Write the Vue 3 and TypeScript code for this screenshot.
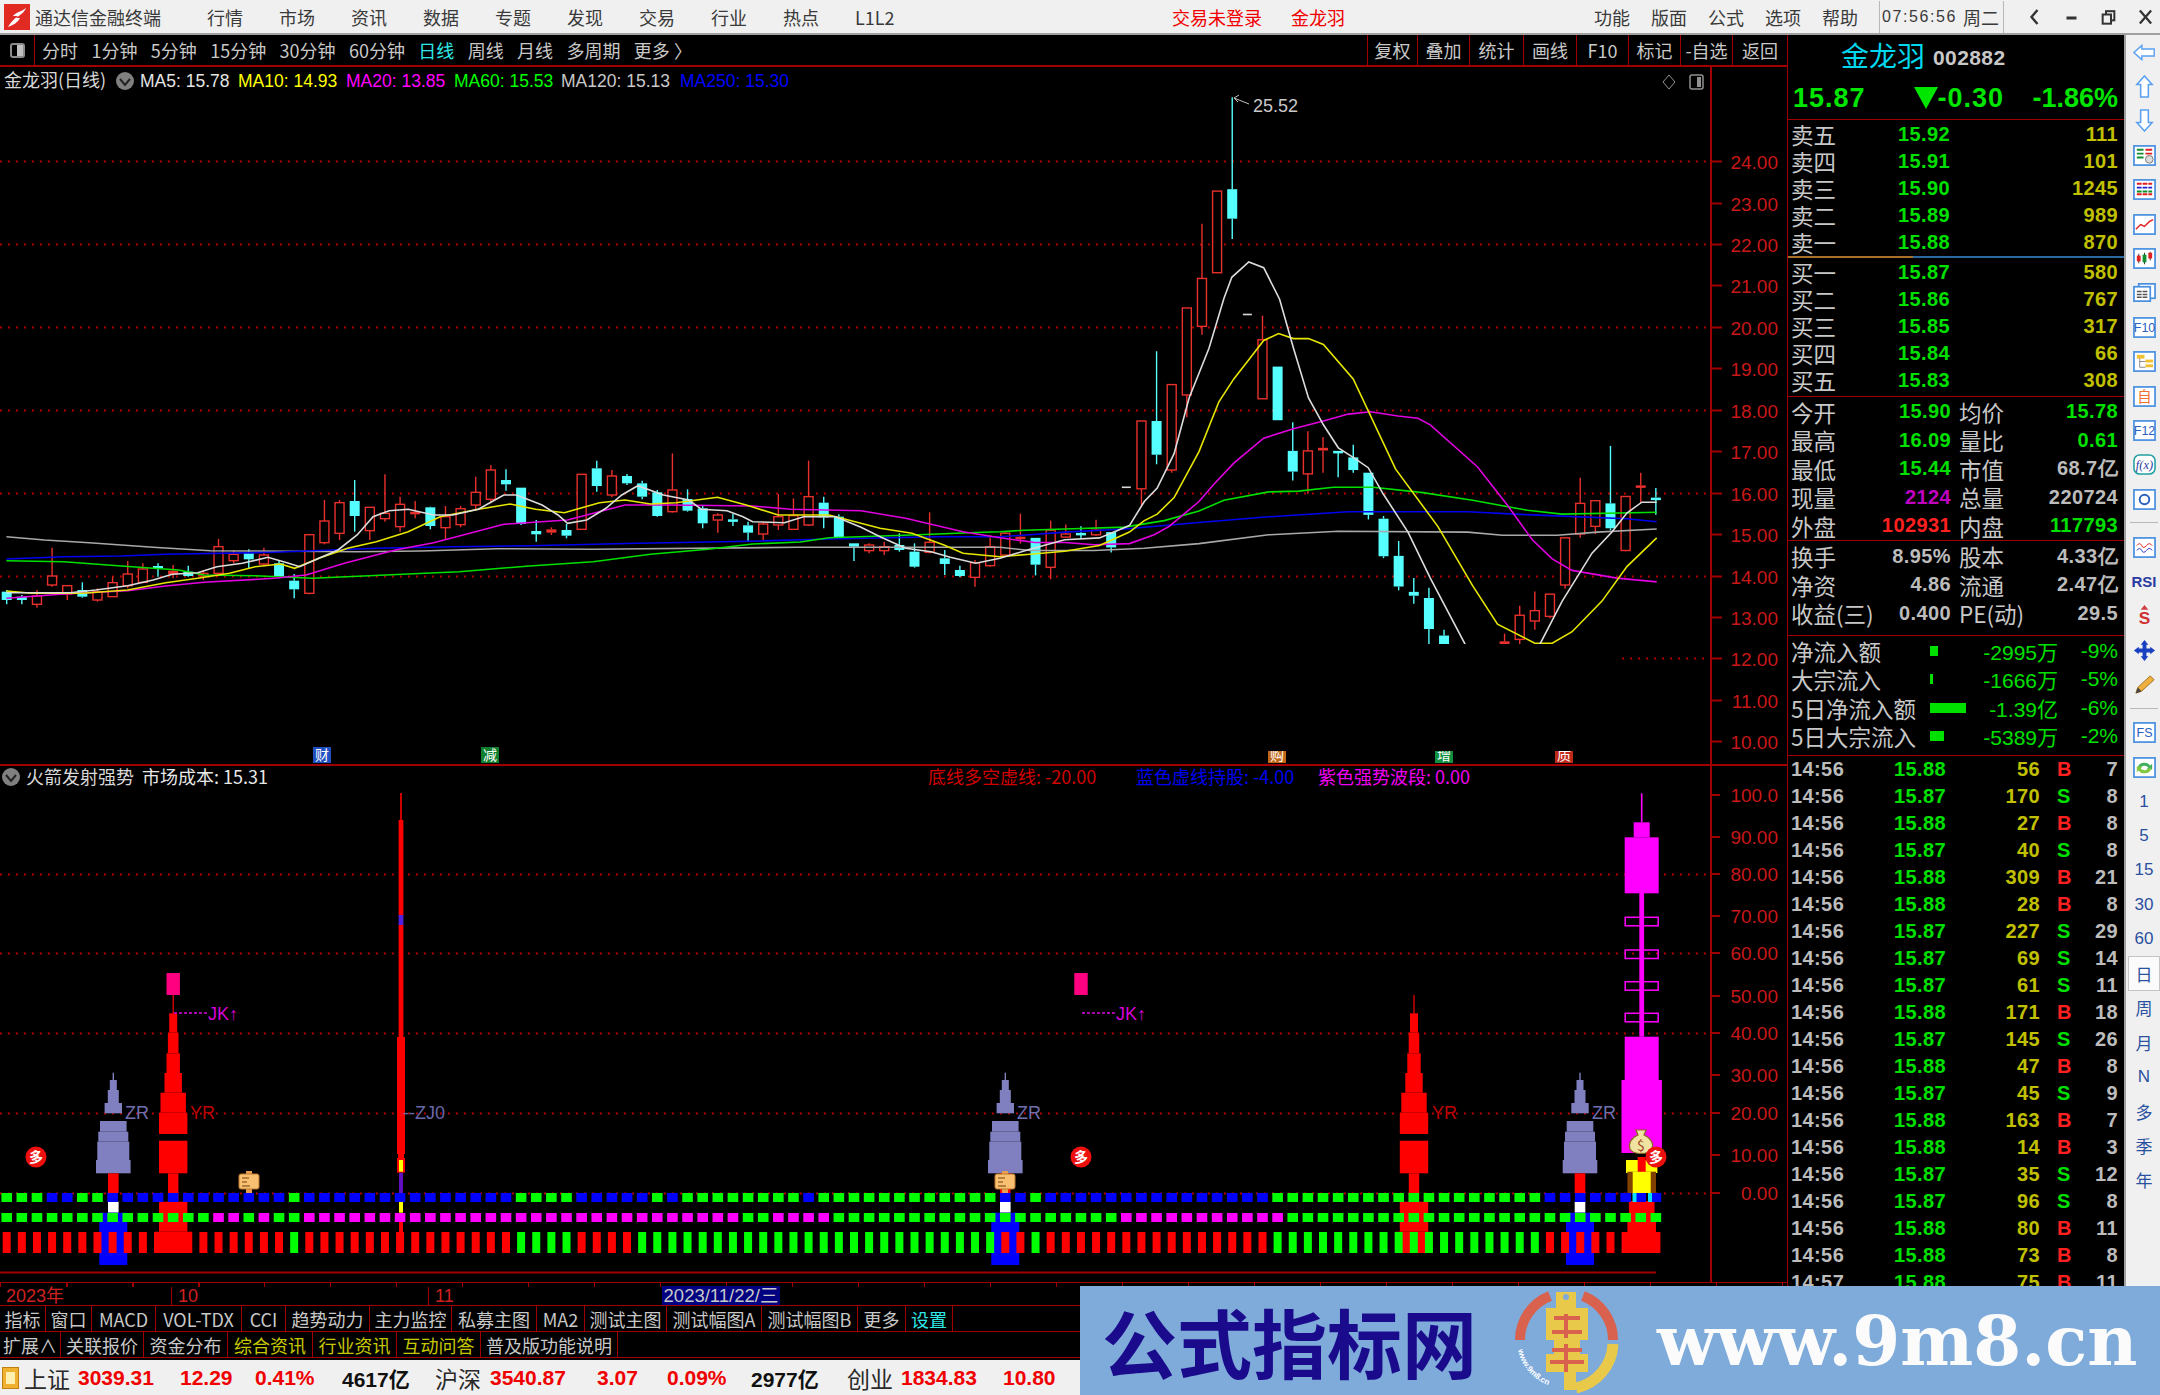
<script setup lang="ts">
type Kind = 'u' | 'd' | 'f' | 'w'
type Reading = [Kind, number, number, number, number]
type Block = [number, number, number, string]

const RED = '#ff0000'
const GRAY = '#8080c0'
const PINK = '#ff00ff'
const YEL = '#ffff00'

const barX = (i: number) => 6.7 + 15.13 * i

// readings off the chart: [kind, high, body top, body bottom, low]
const leftBars: Reading[] = [
  ['d',510,515,540,553],['d',525,530,540,553],['u',510,528,553,563],['u',383,468,495,500],['u',495,497,522,540],
  ['d',487,510,530,533],['u',505,515,540,545],['u',470,488,530,530],['u',423,462,497,505],['u',430,447,487,490],
  ['d',430,438,443,470],['f',435,452,463,475],['d',437,455,468,470],['u',450,460,468,480],['u',357,380,460,462],
  ['u',390,403,422,430],['d',388,400,418,445],['u',383,405,432,435],['d',420,430,470,475],['d',462,482,508,535],
  ['u',343,344,520,523],['u',240,303,368,373],['u',240,248,340,360],['d',180,243,288,335],['u',262,262,332,360],
  ['u',163,280,296,305],['u',230,253,320,335],['f',243,275,283,295],['d',260,262,318,328],['u',258,290,323,360],
  ['u',258,266,314,322],['u',170,217,255,270],['u',135,150,238,250],['d',148,180,193,212],['d',203,203,312,315],
  ['d',300,333,343,365],['f',322,328,338,345],['d',312,330,347,355],['u',163,163,328,330],['d',122,145,198,215],
  ['u',150,168,225,232],['d',162,168,190,195],['d',182,190,230,238],['d',210,217,288,290],['u',100,210,275,278],
  ['d',208,237,272,275],['d',258,265,310,325],['u',280,285,300,338],['d',282,298,300,318],['d',305,316,338,365],
  ['u',305,312,342,362],['u',222,290,315,330],['u',235,287,328,330],['u',122,230,315,318],['d',230,248,292,325],
  ['d',283,290,352,355],['d',370,370,380,423],['u',370,375,392,400],['u',365,380,392,405],['d',340,375,390,395],
  ['d',370,395,440,443],['u',277,367,397,400],['d',390,415,432,465],['d',437,450,468,472],['u',420,428,472,500],
  ['u',345,380,437,440]
]
const rightBars: Reading[] = [
  ['u',1180,1183,1240,1240],['f',1132,1192,1196,1210],['d',1195,1195,1265,1293],['u',1150,1175,1272,1303],
  ['u',1160,1185,1193,1195],['d',1165,1182,1185,1198],['u',1148,1175,1187,1190],['d',1180,1180,1220,1233],
  ['w',1063,1063,1063,1063],['u',890,890,1067,1110],['d',708,890,978,1003],['u',795,795,1018,1025],
  ['u',595,595,822,880],['u',375,518,643,665],['u',290,290,503,503],['d',45,285,362,415],
  ['w',612,612,612,612],['u',615,678,832,832],['d',748,748,888,888],['d',893,968,1022,1045],
  ['u',917,968,1028,1080],['f',932,960,967,1025],['d',968,968,973,1037],['d',952,985,1018,1025],
  ['d',1025,1025,1135,1147],['d',1138,1145,1243,1248],['d',1203,1242,1322,1332],['d',1300,1336,1346,1367],
  ['d',1325,1352,1433,1473],['d',1435,1450,1500,1500],['u',1480,1500,1600,1620],['u',1520,1560,1640,1660],
  ['u',1500,1540,1600,1620],['f',1445,1465,1473,1500],['u',1372,1397,1460,1473],['u',1335,1385,1412,1435],
  ['u',1342,1342,1400,1405],['u',1195,1195,1318,1328],['u',1038,1105,1185,1195],['u',1098,1098,1165,1185],
  ['d',955,1105,1170,1175],['u',1087,1087,1228,1230],['f',1025,1058,1063,1103],['d',1065,1090,1092,1135]
]

const leftY = (v: number) => 420 + v / 3
const rightY = (v: number) => 80 + v / 2.61

const candleColor = (k: Kind) => (k === 'd' ? '#55ffff' : k === 'w' ? '#d8d8d8' : '#e8302c')
const candles = [
  ...leftBars.map((r, i) => ({ r, x: barX(i), y: leftY })),
  ...rightBars.map((r, i) => ({ r, x: barX(i + 66), y: rightY }))
].map(({ r, x, y }) => ({
  x,
  kind: r[0],
  color: candleColor(r[0]),
  hi: y(r[1]),
  top: y(r[2]),
  bot: y(r[3]),
  lo: y(r[4])
}))

const toPoints = (left: number[][], right: number[][]) =>
  [
    ...left.map(([x, y]) => `${(x / 1.568).toFixed(1)},${leftY(y).toFixed(1)}`),
    ...right.map(([x, y]) => `${(1000 + x / 2.01).toFixed(1)},${rightY(y).toFixed(1)}`)
  ].join(' ')

const maLines = [
  { color: '#a8a8a8', points: toPoints(
    [[10,350],[70,360],[140,368],[240,382],[330,392],[560,395],[660,393],[780,386],[930,388],[1250,382],[1568,382]],
    [[60,1228],[190,1228],[290,1222],[400,1210],[540,1187],[680,1178],[940,1180],[1010,1188],[1120,1188],[1200,1180],[1320,1172]]) },
  { color: '#0000f0', points: toPoints(
    [[10,417],[100,410],[190,408],[260,403],[430,397],[590,385],[710,380],[830,377],[1000,370],[1090,367],[1190,363],[1300,357],[1470,350],[1568,350]],
    [[60,1187],[130,1180],[250,1172],[400,1155],[540,1140],[700,1127],[940,1127],[1070,1135],[1260,1145],[1320,1153]]) },
  { color: '#00e000', points: toPoints(
    [[10,422],[100,425],[190,438],[280,450],[320,465],[400,467],[490,475],[640,462],[720,455],[830,438],[930,425],[1020,403],[1110,388],[1180,372],[1255,366],[1300,353],[1430,345],[1540,337],[1568,335]],
    [[50,1175],[130,1172],[250,1167],[330,1150],[400,1125],[450,1097],[540,1075],[600,1073],[670,1063],[750,1063],[850,1077],[950,1097],[1060,1123],[1130,1133],[1320,1128]]) },
  { color: '#e000e0', points: toPoints(
    [[10,535],[100,522],[200,512],[260,498],[320,487],[430,475],[480,465],[540,430],[620,390],[680,368],[790,313],[890,300],[980,255],[1050,255],[1180,258],[1240,268],[1350,272],[1420,295],[1510,335],[1568,353]],
    [[70,1207],[130,1207],[190,1213],[260,1210],[310,1187],[340,1165],[400,1100],[430,1055],[470,1000],[530,935],[590,910],[650,890],[700,872],[745,866],[800,877],[840,883],[865,900],[960,1010],[1020,1110],[1070,1200],[1110,1250],[1150,1280],[1240,1300],[1320,1310]]) },
  { color: '#e6e600', points: toPoints(
    [[10,513],[50,520],[130,520],[200,510],[260,488],[310,475],[360,460],[400,440],[440,432],[462,445],[500,415],[545,385],[590,365],[640,335],[690,290],[750,268],[800,252],[840,268],[885,278],[940,248],[980,240],[1020,252],[1060,248],[1125,232],[1170,255],[1220,285],[1300,285],[1380,325],[1430,340],[1480,375],[1510,400],[1568,410]],
    [[60,1238],[130,1230],[200,1215],[260,1180],[290,1150],[316,1133],[350,1090],[400,970],[440,840],[470,780],[500,730],[530,680],[560,662],[590,675],[620,675],[650,690],[710,780],[795,1015],[880,1165],[950,1320],[1000,1420],[1075,1470],[1110,1470],[1150,1440],[1210,1360],[1260,1270],[1320,1195]]) },
  { color: '#dcdcdc', points: toPoints(
    [[10,518],[60,518],[110,518],[150,510],[200,497],[240,480],[270,463],[310,458],[340,440],[380,430],[420,412],[450,428],[470,440],[500,415],[530,390],[560,345],[585,290],[610,272],[640,268],[680,285],[710,285],[750,268],[790,225],[810,225],[850,255],[875,285],[890,310],[920,300],[950,265],[975,225],[1000,197],[1040,225],[1080,240],[1100,268],[1140,272],[1165,290],[1180,305],[1230,308],[1260,290],[1310,290],[1350,322],[1380,350],[1420,385],[1460,395],[1490,412],[1530,430],[1568,415]],
    [[60,1225],[130,1200],[200,1195],[260,1163],[290,1100],[316,1065],[350,975],[380,830],[420,700],[450,570],[466,515],[500,475],[530,490],[562,572],[590,700],[620,830],[650,900],[680,960],[710,985],[740,1012],[770,1080],[820,1180],[865,1300],[935,1473],[1000,1650],[1060,1560],[1085,1473],[1130,1360],[1190,1235],[1230,1180],[1260,1130],[1290,1102],[1320,1102]]) }
]

const grid = [24, 22, 20, 18, 16, 14]
const priceY = (p: number) => Math.round(161.2 + (24 - p) * 41.43) + 0.5
const axisPrices = Array.from({ length: 15 }, (_, i) => 24 - i)

const maLegend = [
  { x: 140, color: '#e4e4e4', text: 'MA5: 15.78' },
  { x: 238, color: '#ffff00', text: 'MA10: 14.93' },
  { x: 346, color: '#ff00ff', text: 'MA20: 13.85' },
  { x: 454, color: '#00ff00', text: 'MA60: 15.53' },
  { x: 561, color: '#c8c8c8', text: 'MA120: 15.13' },
  { x: 680, color: '#0000ff', text: 'MA250: 15.30' }
]

const notices = [
  { x: 322, bg: '#2050c0', text: '财', cut: false },
  { x: 490, bg: '#108030', text: '减', cut: false },
  { x: 1277, bg: '#c06818', text: '购', cut: true },
  { x: 1444, bg: '#109040', text: '增', cut: true },
  { x: 1564, bg: '#c02818', text: '质', cut: true }
]

// lower pane
const subTicks = [
  { y: 795, label: '100.0' }, { y: 837, label: '90.00' }, { y: 874, label: '80.00' }, { y: 916, label: '70.00' },
  { y: 953, label: '60.00' }, { y: 996, label: '50.00' }, { y: 1033, label: '40.00' }, { y: 1075, label: '30.00' },
  { y: 1113, label: '20.00' }, { y: 1155, label: '10.00' }, { y: 1193, label: '0.00' }
]
const subGrid = [874.5, 953.5, 1033.5, 1113.5, 1193.5]

const expand = (runs: [string, number][]) => runs.flatMap(([c, n]) => Array<string>(n).fill(c))
const G = '#00ff00'
const B = '#0000ff'
const M = '#ff00ff'
const rowA = expand([[G,3],[B,2],[G,2],[B,12],[G,1],[B,14],[G,4],[B,5],[G,1],[B,1],[G,8],[B,1],[G,12],[B,2],[G,1],[B,15],[G,18],[B,8]])
const rowB = expand([[G,14],[M,2],[G,1],[M,1],[G,2],[M,29],[G,2],[M,4],[G,19],[M,11],[G,25]])
const rowC = expand([[RED,19],[G,1],[RED,14],[G,4],[RED,4],[G,24],[RED,2],[G,1],[RED,15],[G,18],[RED,8]])

const grayRocket = (x: number) => ({
  x,
  blocks: [
    [0.7, 1072.7, 1080, GRAY], [3.5, 1080, 1090, GRAY], [5.5, 1090, 1103, GRAY], [8.7, 1103, 1113.3, GRAY],
    [13.3, 1121, 1131.7, GRAY], [15, 1131.7, 1141.7, GRAY], [16, 1141.7, 1160, GRAY], [17.3, 1160, 1173.3, GRAY],
    [5.3, 1173.3, 1193, RED], [5.3, 1201.7, 1212.7, '#ffffff'], [14, 1212.7, 1265, B]
  ] as Block[]
})
const redRocket = (x: number) => ({
  x,
  blocks: [
    [0.6, 995, 1013.3, RED], [4, 1013.3, 1032.7, RED], [5.3, 1032.7, 1053.3, RED], [6.7, 1053.3, 1073, RED],
    [8.7, 1073, 1092.7, RED], [12.7, 1092.7, 1112.7, RED], [14.2, 1112.7, 1134, RED], [14.2, 1140.7, 1173.3, RED],
    [5.2, 1173.3, 1201.7, RED], [14.2, 1201.7, 1231.7, RED], [18.5, 1231.7, 1253, RED]
  ] as Block[]
})
const rockets = [
  grayRocket(113.3),
  redRocket(173.2),
  {
    x: 401,
    blocks: [
      [0.8, 793, 820, RED], [2.4, 820, 915, RED], [2.4, 915, 925, '#5020e0'], [2.4, 925, 1037, RED], [4, 1037, 1154, RED],
      [3, 1154, 1160, RED], [4, 1158, 1172.7, RED], [2, 1160, 1171.7, YEL], [2, 1172.7, 1193, '#6010c0'],
      [2, 1201.7, 1212.7, YEL], [2, 1221, 1232, RED]
    ] as Block[]
  },
  grayRocket(1005.3),
  redRocket(1414),
  grayRocket(1580),
  {
    x: 1641.7,
    blocks: [
      [0.8, 793.3, 822.3, PINK], [8, 822.3, 837.3, PINK], [17, 837.3, 893.3, PINK], [2.4, 893, 1036.7, PINK],
      [17, 1036.7, 1080, PINK], [20.2, 1080, 1153, PINK], [15.7, 1160, 1173, YEL], [14.3, 1171.7, 1193, '#804000'],
      [9, 1171.7, 1193, YEL], [4, 1157, 1171.7, RED], [12.8, 1201, 1213, RED], [14.3, 1213, 1232, RED], [18.7, 1232, 1253, RED]
    ] as Block[]
  }
]
const hollowBoxes = [917.3, 950, 981.7, 1013.3]

const jkMarks = [
  { sq: 173.2, from: 174, to: 207, y: 1013 },
  { sq: 1081, from: 1082, to: 1115, y: 1013 }
]
const duoMarks = [[36, 1157], [1081, 1157], [1656, 1157]]
const noteMarks = [[249, 1182], [1005, 1182]]

// right panel
const sells = [
  ['卖五', '15.92', '111'], ['卖四', '15.91', '101'], ['卖三', '15.90', '1245'], ['卖二', '15.89', '989'], ['卖一', '15.88', '870']
]
const buys = [
  ['买一', '15.87', '580'], ['买二', '15.86', '767'], ['买三', '15.85', '317'], ['买四', '15.84', '66'], ['买五', '15.83', '308']
]
const stats = [
  { a: '今开', v: '15.90', vc: 'green', b: '均价', w: '15.78', wc: 'green' },
  { a: '最高', v: '16.09', vc: 'green', b: '量比', w: '0.61', wc: 'green' },
  { a: '最低', v: '15.44', vc: 'green', b: '市值', w: '68.7亿', wc: 'gray' },
  { a: '现量', v: '2124', vc: 'purple', b: '总量', w: '220724', wc: 'gray' },
  { a: '外盘', v: '102931', vc: 'red', b: '内盘', w: '117793', wc: 'green' }
]
const finance = [
  { a: '换手', v: '8.95%', b: '股本', w: '4.33亿' },
  { a: '净资', v: '4.86', b: '流通', w: '2.47亿' },
  { a: '收益(三)', v: '0.400', b: 'PE(动)', w: '29.5' }
]
const flows = [
  { label: '净流入额', bar: 8, value: '-2995万', pct: '-9%' },
  { label: '大宗流入', bar: 3, value: '-1666万', pct: '-5%' },
  { label: '5日净流入额', bar: 36, value: '-1.39亿', pct: '-6%' },
  { label: '5日大宗流入', bar: 14, value: '-5389万', pct: '-2%' }
]
const ticks: [string, string, string, string, string][] = [
  ['14:56','15.88','56','B','7'],['14:56','15.87','170','S','8'],['14:56','15.88','27','B','8'],['14:56','15.87','40','S','8'],
  ['14:56','15.88','309','B','21'],['14:56','15.88','28','B','8'],['14:56','15.87','227','S','29'],['14:56','15.87','69','S','14'],
  ['14:56','15.87','61','S','11'],['14:56','15.88','171','B','18'],['14:56','15.87','145','S','26'],['14:56','15.88','47','B','8'],
  ['14:56','15.87','45','S','9'],['14:56','15.88','163','B','7'],['14:56','15.88','14','B','3'],['14:56','15.87','35','S','12'],
  ['14:56','15.87','96','S','8'],['14:56','15.88','80','B','11'],['14:56','15.88','73','B','8'],['14:57','15.88','75','B','11']
]

const menus = ['行情', '市场', '资讯', '数据', '专题', '发现', '交易', '行业', '热点', 'L1L2']
const sysMenus = ['功能', '版面', '公式', '选项', '帮助']
const periods = ['分时', '1分钟', '5分钟', '15分钟', '30分钟', '60分钟', '日线', '周线', '月线', '多周期', '更多 〉']
const chartBtns = ['复权', '叠加', '统计', '画线', 'F10', '标记', '-自选', '返回']
const tabs1 = ['指标', '窗口', 'MACD', 'VOL-TDX', 'CCI', '趋势动力', '主力监控', '私募主图', 'MA2', '测试主图', '测试幅图A', '测试幅图B', '更多', '设置']
const tabs2 = ['扩展∧', '关联报价', '资金分布', '综合资讯', '行业资讯', '互动问答', '普及版功能说明']
const cycles = ['1', '5', '15', '30', '60', '日', '周', '月', 'N', '多', '季', '年']
const index = [
  { t: '上证', c: 'name' }, { t: '3039.31', c: 'up' }, { t: '12.29', c: 'up' }, { t: '0.41%', c: 'up' }, { t: '4617亿', c: 'amt' },
  { t: '沪深', c: 'name' }, { t: '3540.87', c: 'up' }, { t: '3.07', c: 'up' }, { t: '0.09%', c: 'up' }, { t: '2977亿', c: 'amt' },
  { t: '创业', c: 'name' }, { t: '1834.83', c: 'up' }, { t: '10.80', c: 'up' }
]
</script>

<template>
  <div class="terminal">
    <header class="menubar">
      <svg class="app-logo" viewBox="0 0 26 26">
        <rect width="26" height="26" fill="#e02a22" />
        <path d="M22 4 C17 8 12 8 9 12 L14 12 C10 15 7 18 4 23 C11 20 14 18 16 14 L12 14 C16 11 20 9 22 4 Z" fill="#fff" />
      </svg>
      <span class="app-name">通达信金融终端</span>
      <nav class="menus"><span v-for="m in menus" :key="m">{{ m }}</span></nav>
      <span class="login">交易未登录</span>
      <span class="login">金龙羽</span>
      <nav class="sys-menus"><span v-for="m in sysMenus" :key="m">{{ m }}</span></nav>
      <div class="clock"><span class="time">07:56:56</span><span>周二</span></div>
      <div class="win-btns">
        <svg viewBox="0 0 14 20"><path d="M10 3 L4 10 L10 17" fill="none" stroke="#333" stroke-width="2.4" /></svg>
        <svg viewBox="0 0 14 20"><path d="M2 11 H12" stroke="#333" stroke-width="3" /></svg>
        <svg viewBox="0 0 18 20"><rect x="6" y="3" width="10" height="11" fill="none" stroke="#333" stroke-width="2.4" /><rect x="2" y="7" width="10" height="11" fill="#f0f0f0" stroke="#333" stroke-width="2.4" /></svg>
        <svg viewBox="0 0 16 20"><path d="M2 3 L14 17 M14 3 L2 17" stroke="#333" stroke-width="2.4" /></svg>
      </div>
    </header>

    <div class="workspace">
      <section class="charts">
        <div class="period-bar">
          <div class="period-toggle"><span class="toggle-icon"><i /></span></div>
          <div class="periods">
            <span v-for="p in periods" :key="p" :class="{ active: p === '日线' }">{{ p }}</span>
          </div>
          <div class="chart-btns"><span v-for="b in chartBtns" :key="b">{{ b }}</span></div>
        </div>

        <svg class="pane" viewBox="0 67 1787 1215" width="1787" height="1215">
          <defs>
            <clipPath id="notice-cut"><rect x="0" y="751" width="1787" height="14" /></clipPath>
          </defs>
          <text class="t-cjk" x="4" y="87" fill="#d8d8d8">金龙羽(日线)</text>
          <circle cx="125" cy="81" r="9" fill="#808080" />
          <path d="M120 79 L125 85 L130 79" fill="none" stroke="#222" stroke-width="2" />
          <text v-for="m in maLegend" :key="m.text" class="t-num" :x="m.x" y="87" :fill="m.color">{{ m.text }}</text>
          <path d="M1669 75 L1675 82 L1669 89 L1663 82 Z" fill="none" stroke="#909090" />
          <rect x="1690" y="75" width="13" height="14" rx="2" fill="none" stroke="#909090" stroke-width="1.5" />
          <rect x="1697" y="77" width="4" height="10" fill="#909090" />

          <line v-for="p in grid" :key="p" class="dots" x1="0" x2="1710" :y1="priceY(p)" :y2="priceY(p)" />

          <g v-for="(c, i) in candles" :key="i">
            <line v-if="c.kind === 'w'" :x1="c.x - 4.5" :x2="c.x + 4.5" :y1="c.top" :y2="c.top" :stroke="c.color" stroke-width="1.6" />
            <template v-else>
              <line :x1="c.x" :x2="c.x" :y1="c.hi" :y2="c.top" :stroke="c.color" stroke-width="1.4" />
              <line :x1="c.x" :x2="c.x" :y1="c.bot" :y2="c.lo" :stroke="c.color" stroke-width="1.4" />
              <rect v-if="c.kind === 'u'" :x="c.x - 4.5" :y="c.top" width="9" :height="c.bot - c.top" fill="#000" :stroke="c.color" stroke-width="1.4" />
              <rect v-else :x="c.x - 5" :y="c.top" width="10" :height="Math.max(c.bot - c.top, 2.5)" :fill="c.color" />
            </template>
          </g>
          <polyline v-for="l in maLines" :key="l.color" :points="l.points" fill="none" :stroke="l.color" stroke-width="1.6" />

          <!-- the lower part of the candle area is blanked in the reference -->
          <rect x="0" y="644" width="1622" height="121" fill="#000" />
          <line class="dots" x1="1622" x2="1710" :y1="priceY(12)" :y2="priceY(12)" />

          <g v-for="n in notices" :key="n.x" :clip-path="n.cut ? 'url(#notice-cut)' : undefined">
            <rect :x="n.x - 9" y="747" width="18" height="16" :fill="n.bg" />
            <text class="t-mark" :x="n.x" y="760" fill="#fff" text-anchor="middle">{{ n.text }}</text>
          </g>

          <path d="M1234 98 L1249 104 M1234 98 L1239 95 M1234 98 L1238 102" stroke="#c0c0c0" fill="none" />
          <text class="t-small" x="1253" y="112" fill="#c8c8c8">25.52</text>

          <g v-for="p in axisPrices" :key="p">
            <line class="axis" x1="1711" x2="1722" :y1="priceY(p)" :y2="priceY(p)" />
            <text class="t-axis" x="1778" :y="priceY(p) + 7" text-anchor="end">{{ p.toFixed(2) }}</text>
          </g>

          <line class="axis" x1="0" x2="1787" y1="765" y2="765" />

          <circle cx="11" cy="777" r="9" fill="#808080" />
          <path d="M6 775 L11 781 L16 775" fill="none" stroke="#222" stroke-width="2" />
          <text class="t-cjk" x="26" y="784" fill="#d8d8d8">火箭发射强势</text>
          <text class="t-cjk" x="142" y="784" fill="#e8e8e8">市场成本: 15.31</text>
          <text class="t-cjk" x="928" y="784" fill="#d00000">底线多空虚线: -20.00</text>
          <text class="t-cjk" x="1136" y="784" fill="#0000f0">蓝色虚线持股: -4.00</text>
          <text class="t-cjk" x="1318" y="784" fill="#f000f0">紫色强势波段: 0.00</text>

          <line v-for="y in subGrid" :key="y" class="dots" x1="0" x2="1710" :y1="y" :y2="y" />

          <g v-for="(r, i) in rockets" :key="i">
            <rect v-for="(b, j) in r.blocks" :key="j" :x="r.x - b[0]" :y="b[1]" :width="b[0] * 2" :height="b[2] - b[1]" :fill="b[3]" />
          </g>
          <rect v-for="y in hollowBoxes" :key="y" x="1625.2" :y="y" width="33" height="8.5" fill="none" stroke="#ff00ff" stroke-width="1.5" />

          <rect v-for="(c, i) in rowA" :key="'a' + i" :x="barX(i) - 5.3" y="1193" width="10.6" height="9" :fill="c" />
          <rect x="1632.5" y="1193" width="4" height="9" fill="#00e0ff" />
          <rect x="1648" y="1193" width="4" height="9" fill="#00e0ff" />
          <rect v-for="(c, i) in rowB" :key="'b' + i" :x="barX(i) - 5.3" y="1213" width="10.6" height="9" :fill="c" />
          <rect v-for="(c, i) in rowC" :key="'c' + i" :x="barX(i) - 4" y="1232" width="8" height="21" :fill="c" />

          <g v-for="j in jkMarks" :key="j.sq">
            <rect :x="j.sq - 6.7" y="973" width="13.4" height="22" fill="#ff0080" />
            <line :x1="j.from" :x2="j.to" :y1="j.y" :y2="j.y" stroke="#e000e0" stroke-dasharray="3 2" stroke-width="1.5" />
            <text class="t-small" :x="j.to + 1" :y="j.y + 7" fill="#d800d8">JK↑</text>
          </g>

          <text class="t-small" x="125" y="1119" fill="#7070b0">ZR</text>
          <text class="t-small" x="1017" y="1119" fill="#7070b0">ZR</text>
          <text class="t-small" x="1592" y="1119" fill="#7070b0">ZR</text>
          <text class="t-small" x="190" y="1119" fill="#c00000">YR</text>
          <text class="t-small" x="1432" y="1119" fill="#c00000">YR</text>
          <text class="t-small" x="403" y="1119" fill="#6868a8">--ZJ0</text>

          <g v-for="n in noteMarks" :key="n[0]">
            <rect :x="n[0] - 3" :y="n[1] - 11" width="6" height="22" fill="#e8a050" />
            <rect :x="n[0] - 10" :y="n[1] - 8" width="20" height="15" rx="2" fill="#f8c070" stroke="#c07830" />
            <path :d="`M${n[0] - 7} ${n[1] - 4} h7 M${n[0] - 7} ${n[1]} h5 M${n[0] - 7} ${n[1] + 4} h8`" stroke="#704010" stroke-width="1" />
          </g>

          <g>
            <path d="M1636 1130 h10 l-2 5 c7 3 10 9 8 14 c-3 6 -19 6 -22 0 c-2 -5 1 -11 8 -14 z" fill="#f0e2a0" stroke="#8a6a20" stroke-width="1.2" />
            <text class="t-mark" x="1641" y="1151" fill="#a04020" text-anchor="middle">$</text>
          </g>
          <g v-for="d in duoMarks" :key="d[0]">
            <circle :cx="d[0]" :cy="d[1]" r="10.5" fill="#ee0f0f" />
            <text class="t-duo" :x="d[0]" :y="d[1] + 5" fill="#fff" text-anchor="middle">多</text>
          </g>

          <line class="axis" x1="0" x2="1656" y1="1272.5" y2="1272.5" />
          <line class="axis" x1="1711" x2="1711" y1="67" y2="1282" />
          <g v-for="t in subTicks" :key="t.label">
            <line class="axis" x1="1711" x2="1720" :y1="t.y" :y2="t.y" />
            <text class="t-axis" x="1778" :y="t.y + 7" text-anchor="end">{{ t.label }}</text>
          </g>
        </svg>

        <div class="date-axis">
          <span class="date-cell first">2023年</span>
          <span class="date-cell second">10</span>
          <span class="date-cell third">11</span>
          <span class="date-tip">2023/11/22/三</span>
        </div>
        <div class="tabs tabs-a">
          <span v-for="t in tabs1" :key="t" :class="{ cyan: t === '设置' }">{{ t }}</span>
        </div>
        <div class="tabs tabs-b">
          <span v-for="t in tabs2" :key="t" :class="{ olive: t === '综合资讯' || t === '行业资讯' || t === '互动问答' }">{{ t }}</span>
        </div>
      </section>

      <aside class="quote">
        <div class="q-title"><span class="q-name">金龙羽</span><span class="q-code">002882</span></div>
        <div class="q-price">
          <span class="q-last">15.87</span>
          <span class="q-tri" />
          <span class="q-chg">-0.30</span>
          <span class="q-pct">-1.86%</span>
        </div>
        <div class="book">
          <div v-for="r in sells" :key="r[0]" class="book-row">
            <span class="lbl">{{ r[0] }}</span><span class="num green">{{ r[1] }}</span><span class="num olive vol">{{ r[2] }}</span>
          </div>
        </div>
        <div class="book-split"><i /><b /></div>
        <div class="book book-buy">
          <div v-for="r in buys" :key="r[0]" class="book-row">
            <span class="lbl">{{ r[0] }}</span><span class="num green">{{ r[1] }}</span><span class="num olive vol">{{ r[2] }}</span>
          </div>
        </div>
        <div class="stats">
          <div v-for="s in stats" :key="s.a" class="stat-row">
            <span class="lbl">{{ s.a }}</span>
            <span class="num val" :class="s.vc">{{ s.v }}</span>
            <span class="lbl lbl-2">{{ s.b }}</span>
            <span class="num val" :class="s.wc">{{ s.w }}</span>
          </div>
        </div>
        <div class="stats finance">
          <div v-for="s in finance" :key="s.a" class="stat-row">
            <span class="lbl">{{ s.a }}</span>
            <span class="num val gray">{{ s.v }}</span>
            <span class="lbl lbl-2">{{ s.b }}</span>
            <span class="num val gray">{{ s.w }}</span>
          </div>
        </div>
        <div class="flows">
          <div v-for="f in flows" :key="f.label" class="flow-row">
            <span class="lbl">{{ f.label }}</span>
            <span class="flow-bar"><i :style="{ width: f.bar + 'px' }" /></span>
            <span class="flow-val">{{ f.value }}</span>
            <span class="flow-pct">{{ f.pct }}</span>
          </div>
        </div>
        <div class="tick-list">
          <div v-for="(t, i) in ticks" :key="i" class="tick-row">
            <span class="num gray">{{ t[0] }}</span>
            <span class="num green tick-price">{{ t[1] }}</span>
            <span class="num olive tick-vol">{{ t[2] }}</span>
            <span class="num tick-side" :class="t[3] === 'B' ? 'red' : 'green'">{{ t[3] }}</span>
            <span class="num gray tick-count">{{ t[4] }}</span>
          </div>
        </div>
      </aside>

      <aside class="tools">
        <div class="tool"><svg viewBox="0 0 26 20"><path d="M1 10 L10 2 V6 H24 V14 H10 V18 Z" class="ic-arrow" /></svg></div>
        <div class="tool"><svg viewBox="0 0 20 24"><path d="M10 1 L18 10 H14 V23 H6 V10 H2 Z" class="ic-arrow" /></svg></div>
        <div class="tool"><svg viewBox="0 0 20 24"><path d="M10 23 L18 14 H14 V1 H6 V14 H2 Z" class="ic-arrow" /></svg></div>
        <div class="tool"><svg viewBox="0 0 24 24"><rect x="1" y="2" width="22" height="20" class="ic-box" /><path d="M4 6 h7 M4 10 h7 M4 14 h7" stroke="#109030" stroke-width="2" /><path d="M13 6 h7 M13 10 h7" stroke="#e02020" stroke-width="2" /><circle cx="17" cy="16" r="4" fill="#ddd" stroke="#777" /></svg></div>
        <div class="tool"><svg viewBox="0 0 24 24"><rect x="1" y="2" width="22" height="20" class="ic-box" /><path d="M4 6 H20 M4 17 H20" stroke="#e02020" stroke-width="2" stroke-dasharray="5 1" /><path d="M4 10 H20" stroke="#2020d0" stroke-width="2" stroke-dasharray="5 1" /><path d="M4 14 H20" stroke="#109030" stroke-width="2" stroke-dasharray="5 1" /></svg></div>
        <div class="tool"><svg viewBox="0 0 24 24"><rect x="1" y="2" width="22" height="20" class="ic-box" /><path d="M3 17 L8 12 L12 14 L17 9 L21 7" fill="none" stroke="#e02020" stroke-width="1.5" /></svg></div>
        <div class="tool"><svg viewBox="0 0 24 24"><rect x="1" y="2" width="22" height="20" class="ic-box" /><path d="M6 7 v10 M12 6 v12 M18 5 v9" stroke="#333" /><rect x="4" y="9" width="4" height="6" fill="#e02020" /><rect x="10" y="8" width="4" height="8" fill="#109030" /><rect x="16" y="6" width="4" height="6" fill="#e02020" /></svg></div>
        <div class="tool"><svg viewBox="0 0 24 24"><rect x="6" y="3" width="17" height="15" class="ic-box" /><rect x="1" y="6" width="17" height="15" class="ic-box" /><path d="M4 11 h11 M4 14 h11 M4 17 h11" stroke="#555" stroke-width="1.5" stroke-dasharray="5 1" /></svg></div>
        <div class="tool"><svg viewBox="0 0 24 24"><rect x="1" y="2" width="22" height="20" class="ic-box" /><text x="12" y="17" class="ic-text" text-anchor="middle">F10</text></svg></div>
        <div class="tool"><svg viewBox="0 0 24 24"><rect x="1" y="2" width="22" height="20" class="ic-box" /><path d="M7 8 V18 H13 M7 12 H13" fill="none" stroke="#888" /><rect x="4" y="5" width="8" height="4" fill="#f0c030" /><rect x="13" y="10" width="8" height="3" fill="#f0c030" /><rect x="13" y="15" width="8" height="3" fill="#f0c030" /></svg></div>
        <div class="tool"><svg viewBox="0 0 24 24"><rect x="1" y="2" width="22" height="20" class="ic-box" /><text x="12" y="18" class="ic-cjk" text-anchor="middle" fill="#f07030">自</text></svg></div>
        <div class="tool"><svg viewBox="0 0 24 24"><rect x="1" y="2" width="22" height="20" class="ic-box" /><text x="12" y="17" class="ic-text" text-anchor="middle">F12</text></svg></div>
        <div class="tool"><svg viewBox="0 0 24 24"><rect x="1" y="2" width="22" height="20" rx="6" fill="#fff" stroke="#20a0a0" stroke-width="1.6" /><text x="12" y="17" class="ic-fx" text-anchor="middle">f(x)</text></svg></div>
        <div class="tool"><svg viewBox="0 0 24 24"><rect x="1" y="2" width="22" height="20" class="ic-box" /><circle cx="12" cy="12" r="5" fill="none" stroke="#2a60c0" stroke-width="2" /></svg></div>
        <div class="tool-sep" />
        <div class="tool"><svg viewBox="0 0 24 24"><rect x="1" y="2" width="22" height="20" class="ic-box" /><path d="M4 10 q3 -4 5 0 t5 0 t6 0" fill="none" stroke="#e02020" /><path d="M4 15 q3 -4 5 0 t5 0 t6 0" fill="none" stroke="#2a30c0" /></svg></div>
        <div class="tool"><span class="tool-rsi">RSI</span></div>
        <div class="tool"><svg viewBox="0 0 24 24"><path d="M12 0 L16 5 H8 Z" fill="#d04040" /><text x="12" y="20" class="ic-s" text-anchor="middle">S</text></svg></div>
        <div class="tool"><svg viewBox="0 0 24 24"><path d="M12 1 L16 6 H14 V10 H18 V8 L23 12 L18 16 V14 H14 V18 H16 L12 23 L8 18 H10 V14 H6 V16 L1 12 L6 8 V10 H10 V6 H8 Z" fill="#1840c0" /></svg></div>
        <div class="tool"><svg viewBox="0 0 24 24"><path d="M3 21 L5 15 L18 3 L22 7 L9 19 Z" fill="#f0b040" stroke="#a07020" /><path d="M3 21 L5 15 L9 19 Z" fill="#444" /></svg></div>
        <div class="tool-sep" />
        <div class="tool"><svg viewBox="0 0 24 24"><rect x="1" y="2" width="22" height="20" class="ic-box" /><text x="12" y="17" class="ic-text" text-anchor="middle">FS</text></svg></div>
        <div class="tool"><svg viewBox="0 0 24 24"><rect x="1" y="2" width="22" height="20" class="ic-box" /><path d="M5 12 a7 6 0 0 1 13 -2 l2 -2 v6 h-6 l2 -2 a5 4 0 0 0 -9 1 z" fill="#40b060" /><path d="M19 13 a7 6 0 0 1 -13 2 l-2 2 v-6 h6 l-2 2 a5 4 0 0 0 9 -1 z" fill="#80c840" /></svg></div>
        <div v-for="c in cycles" :key="c" class="tool cycle" :class="{ picked: c === '日' }">{{ c }}</div>
      </aside>
    </div>

    <footer class="status">
      <span class="status-icon"><i /></span>
      <span v-for="(s, i) in index" :key="i" :class="'s-' + s.c">{{ s.t }}</span>
    </footer>

    <div class="watermark">
      <span class="wm-title">公式指标网</span>
      <svg class="wm-logo" viewBox="0 0 105 105">
        <path d="M6 52 A47 47 0 0 1 36 8" fill="none" stroke="#d9624e" stroke-width="10" />
        <path d="M69 8 A47 47 0 0 1 99 52" fill="none" stroke="#d9624e" stroke-width="10" />
        <path d="M99 56 A47 47 0 0 1 62 100" fill="none" stroke="#e8c94a" stroke-width="11" />
        <path d="M42 4 H62 V20 H74 V52 H66 V66 H74 V84 H62 V102 H50 V84 H32 V66 H40 V52 H32 V20 H42 Z" fill="#e8c94a" />
        <circle cx="52" cy="9" r="3" fill="#7faad9" />
        <path d="M40 30 H66 M38 44 H68 M52 26 V50 M38 62 H68 M36 74 H70 M52 56 V84" stroke="#d9624e" stroke-width="4" fill="none" />
        <defs><path id="wm-arc" d="M4 62 A48 48 0 0 0 50 100" /></defs>
        <text class="wm-arc-text" fill="#fff"><textPath href="#wm-arc">www.9m8.cn</textPath></text>
      </svg>
      <span class="wm-url">www.9m8.cn</span>
    </div>
  </div>
</template>

<style scoped>
.terminal {
  position: relative;
  width: 2160px;
  height: 1395px;
  overflow: hidden;
  display: flex;
  flex-direction: column;
  background: #000;
  font-family: "Noto Sans CJK SC", "Liberation Sans", sans-serif;
}

.menubar {
  height: 35px;
  flex: none;
  display: flex;
  align-items: center;
  box-sizing: border-box;
  background: #f0f0f0;
  border-bottom: 2px solid #a0a0a0;
  color: #3a3a3a;
  font-size: 18px;
}

.app-logo {
  width: 26px;
  height: 26px;
  margin-left: 4px;
  flex: none;
}

.app-name {
  width: 172px;
  margin-left: 5px;
  white-space: nowrap;
}

.menus,
.sys-menus {
  display: flex;
  white-space: nowrap;
}

.menus {
  gap: 36px;
  width: 684px;
}

.login {
  color: #f00000;
  margin-left: 29px;
  white-space: nowrap;
}

.menus + .login {
  margin-left: 281px;
}

.sys-menus {
  gap: 21px;
  margin-left: auto;
}

.clock {
  display: flex;
  gap: 6px;
  align-items: center;
  height: 32px;
  margin-left: 21px;
  padding: 0 4px 0 2px;
  border-left: 1px solid #b8b8b8;
  border-right: 1px solid #b8b8b8;
  white-space: nowrap;
}

.time {
  font-family: "Liberation Sans", sans-serif;
  font-size: 16px;
  letter-spacing: 1.6px;
}

.win-btns {
  display: flex;
  align-items: center;
  gap: 22px;
  margin: 0 7px 0 23px;
}

.win-btns svg {
  height: 20px;
  width: 15px;
}

.workspace {
  flex: 1;
  display: flex;
  min-height: 0;
}

.charts {
  width: 1788px;
  flex: none;
  display: flex;
  flex-direction: column;
  box-sizing: border-box;
  border-right: 1.5px solid #a00000;
  overflow: hidden;
}

.period-bar {
  height: 32px;
  flex: none;
  display: flex;
  box-sizing: border-box;
  border-bottom: 2px solid #a00000;
  color: #c8c8c8;
  font-size: 18px;
  line-height: 30px;
}

.period-toggle {
  width: 35px;
  display: flex;
  align-items: center;
  justify-content: center;
  border-right: 1px solid #a00000;
  box-sizing: border-box;
}

.toggle-icon {
  width: 15px;
  height: 15px;
  display: block;
  position: relative;
  border: 2px solid #8c8c8c;
  border-radius: 3px;
  box-sizing: border-box;
}

.toggle-icon i {
  position: absolute;
  right: 0;
  top: 0;
  bottom: 0;
  width: 6px;
  background: #c0c0c0;
}

.periods {
  display: flex;
  gap: 13.4px;
  margin-left: 7px;
  white-space: nowrap;
}

.periods .active {
  color: #30e8e8;
}

.chart-btns {
  margin-left: auto;
  display: grid;
  grid-template-columns: 50px 52px 54px 53px 52px 52px 52px 55px;
}

.chart-btns span {
  text-align: center;
  border-left: 1px solid #a00000;
  white-space: nowrap;
}

.pane {
  display: block;
  flex: none;
  background: #000;
}

.t-cjk {
  font-size: 18px;
}

.t-num {
  font-family: "Liberation Sans", sans-serif;
  font-size: 17.5px;
}

.t-small {
  font-family: "Liberation Sans", sans-serif;
  font-size: 18px;
}

.t-axis {
  font-family: "Liberation Sans", sans-serif;
  font-size: 19px;
  fill: #c81818;
}

.t-mark {
  font-size: 14px;
}

.t-duo {
  font-size: 14px;
  font-weight: 700;
}

.dots {
  stroke: #b00000;
  stroke-width: 2;
  stroke-dasharray: 2 6;
}

.axis {
  stroke: #a00000;
  stroke-width: 2;
}

.date-axis {
  height: 23px;
  flex: none;
  position: relative;
  display: flex;
  box-sizing: border-box;
  border-top: 1.5px solid #a00000;
  color: #d02020;
  font-family: "Liberation Sans", "Noto Sans CJK SC", sans-serif;
  font-size: 18px;
  line-height: 22px;
  background-image: repeating-linear-gradient(90deg, #a00000 0 1.5px, transparent 1.5px 66px);
  background-size: 100% 4px;
  background-repeat: no-repeat;
  background-position: 0 0;
}

.date-cell {
  box-sizing: border-box;
  padding-left: 6px;
  border-right: 1.5px solid #a00000;
  background: #000;
  margin-top: 4px;
  line-height: 18px;
}

.date-cell.first {
  width: 172px;
}

.date-cell.second {
  width: 257px;
}

.date-cell.third {
  width: 233px;
  border-right: 0;
}

.date-tip {
  width: 118px;
  margin-top: 3px;
  background: #000080;
  color: #c8c8c8;
  font-size: 18.5px;
  line-height: 19px;
  white-space: nowrap;
  overflow: hidden;
  text-align: center;
}

.tabs {
  flex: none;
  display: grid;
  box-sizing: border-box;
  border-top: 1.5px solid #a00000;
  color: #c8c8c8;
  font-size: 18px;
  white-space: nowrap;
}

.tabs span {
  text-align: center;
  border-right: 1.5px solid #a00000;
  overflow: hidden;
}

.tabs-a {
  height: 26px;
  line-height: 26px;
  grid-template-columns: 46px 46px 64px 86px 44px 84px 82px 85px 48px 82px 95px 96px 48px 47px;
}

.tabs-b {
  height: 27px;
  line-height: 26px;
  border-bottom: 1.5px solid #a00000;
  grid-template-columns: 61px 83px 84px 85px 84px 84px 137px;
}

.tabs .cyan {
  color: #30e8e8;
}

.tabs .olive {
  color: #c8c800;
}

.quote {
  width: 336px;
  flex: none;
  display: flex;
  flex-direction: column;
  overflow: hidden;
  color: #c8c8c8;
}

.q-title {
  height: 40px;
  flex: none;
  display: flex;
  align-items: center;
  padding-left: 53px;
  box-sizing: border-box;
}

.q-name {
  color: #00d8f0;
  font-size: 28px;
  line-height: 40px;
}

.q-code {
  margin: 5px 0 0 8px;
  font-family: "Liberation Sans", sans-serif;
  font-size: 21px;
  font-weight: 700;
  letter-spacing: 0.4px;
}

.q-price {
  height: 45px;
  flex: none;
  position: relative;
  display: flex;
  align-items: center;
  box-sizing: border-box;
  padding: 2px 6px 0 5px;
  border-bottom: 1.5px solid #a00000;
  color: #00e600;
  font-family: "Liberation Sans", sans-serif;
  font-weight: 700;
  font-size: 27px;
  letter-spacing: 1px;
}

.q-tri {
  margin-left: 48px;
  width: 0;
  height: 0;
  border-left: 12px solid transparent;
  border-right: 12px solid transparent;
  border-top: 22px solid #00e600;
}

.q-pct {
  margin-left: auto;
  letter-spacing: 0;
}

.num {
  font-family: "Liberation Sans", sans-serif;
  font-weight: 700;
  font-size: 20px;
  letter-spacing: 0.4px;
  white-space: nowrap;
}

.green { color: #00e000; }
.olive { color: #c0c000; }
.gray { color: #bcbcbc; }
.red { color: #ff2020; }
.purple { color: #c000c0; }

.book {
  flex: none;
  padding: 0.5px 6px 0 3px;
}

.book-buy {
  padding-top: 1px;
  padding-bottom: 2px;
  border-bottom: 1.5px solid #a00000;
}

.book-row {
  height: 27px;
  display: grid;
  grid-template-columns: 107px 1fr auto;
  align-items: center;
}

.lbl {
  font-size: 22.5px;
  line-height: 26px;
  color: #c8c8c8;
  white-space: nowrap;
}

.book-split {
  height: 2px;
  flex: none;
  display: flex;
}

.book-split i {
  width: 125px;
  background: #a87028;
}

.book-split b {
  flex: 1;
  background: #2a6aa0;
}

.stats {
  flex: none;
  padding: 1px 6px 0 3px;
  box-sizing: border-box;
  border-bottom: 1.5px solid #a00000;
}

.stat-row {
  height: 28.5px;
  display: grid;
  grid-template-columns: 160px 8px 47px 1fr;
  align-items: center;
}

.stat-row .lbl {
  grid-column: 1;
  grid-row: 1;
}

.stat-row .lbl-2 {
  grid-column: 3;
}

.stat-row .val {
  grid-column: 1;
  grid-row: 1;
  text-align: right;
}

.stat-row .lbl-2 + .val {
  grid-column: 4;
  grid-row: 1;
}

.finance {
  padding-bottom: 7px;
}

.flows {
  flex: none;
  padding: 0 6px 5px 3px;
  border-bottom: 1.5px solid #a00000;
}

.flow-row {
  height: 28.5px;
  display: grid;
  grid-template-columns: 139px 40px 88px 1fr;
  align-items: center;
}

.flow-bar i {
  display: block;
  height: 10px;
  background: #00e000;
}

.flow-val,
.flow-pct {
  color: #00e000;
  font-family: "Liberation Sans", "Noto Sans CJK SC", sans-serif;
  font-size: 21px;
  text-align: right;
  white-space: nowrap;
}

.tick-list {
  flex: none;
}

.tick-row {
  height: 27px;
  display: grid;
  grid-template-columns: 103px 83px 63px 18px 1fr;
  align-items: center;
  padding: 0 6px 0 3px;
}

.tick-vol,
.tick-count {
  text-align: right;
}

.tick-side {
  margin-left: 17px;
}

.tools {
  flex: 1;
  display: flex;
  flex-direction: column;
  box-sizing: border-box;
  background: #f0f0f0;
  border-left: 2px solid #a0a0a0;
  padding-left: 2px;
}

.tool {
  height: 34.4px;
  flex: none;
  display: flex;
  align-items: center;
  justify-content: center;
  color: #2a50a0;
  font-size: 17px;
}

.tool svg {
  width: 23px;
  height: 23px;
}

.tool-sep {
  height: 1px;
  flex: none;
  margin: 6px 2px 6.6px;
  background: #b8b8b8;
}

.tool-rsi {
  font-family: "Liberation Sans", sans-serif;
  font-weight: 700;
  font-size: 15px;
  color: #2a3aa0;
}

.cycle {
  font-family: "Liberation Sans", "Noto Sans CJK SC", sans-serif;
}

.cycle.picked {
  background: #fbfbfb;
  border: 1px solid #c4c4c4;
  box-sizing: border-box;
}

.ic-arrow {
  fill: #fff;
  stroke: #5aa0f0;
  stroke-width: 1.6;
}

.ic-box {
  fill: #fff;
  stroke: #4a90e0;
  stroke-width: 1.8;
}

.ic-text {
  font-family: "Liberation Sans", sans-serif;
  font-size: 13px;
  fill: #2a60c0;
}

.ic-cjk {
  font-size: 15px;
}

.ic-fx {
  font-family: "Liberation Serif", serif;
  font-style: italic;
  font-size: 13px;
  fill: #2a40a0;
}

.ic-s {
  font-family: "Liberation Sans", sans-serif;
  font-weight: 700;
  font-size: 18px;
  fill: #d03030;
}

.status {
  height: 35px;
  flex: none;
  display: grid;
  grid-template-columns: 24px 54px 102px 75px 87px 93px 55px 107px 70px 84px 96px 54px 102px 80px;
  align-items: center;
  background: #f0f0f0;
  white-space: nowrap;
  font-family: "Liberation Sans", "Noto Sans CJK SC", sans-serif;
}

.status-icon {
  width: 17px;
  height: 22px;
  margin-left: 2px;
  display: flex;
  align-items: center;
  justify-content: center;
  background: #f0b030;
  border: 1px solid #c08010;
  box-sizing: border-box;
}

.status-icon i {
  width: 9px;
  height: 12px;
  background: #fff0b0;
}

.s-name {
  font-family: "Noto Sans CJK SC", sans-serif;
  font-size: 23px;
  color: #2a2a2a;
}

.s-up {
  font-size: 21px;
  font-weight: 700;
  color: #f00000;
}

.s-amt {
  font-size: 21px;
  font-weight: 700;
  color: #111;
}

.watermark {
  position: absolute;
  left: 1080px;
  right: 0;
  top: 1286px;
  bottom: 0;
  display: flex;
  align-items: center;
  background: #7eabda;
}

.wm-title {
  margin-left: 22px;
  width: 400px;
  flex: none;
  font-size: 75px;
  line-height: 90px;
  font-weight: 700;
  color: #1a0a8c;
  white-space: nowrap;
}

.wm-logo {
  width: 105px;
  height: 105px;
  flex: none;
  margin-left: 12px;
}

.wm-arc-text {
  font-family: "Liberation Sans", sans-serif;
  font-size: 8px;
  font-weight: 700;
}

.wm-url {
  margin-left: 38px;
  font-family: "DejaVu Serif", serif;
  font-size: 69px;
  font-weight: 700;
  color: #fbfbfb;
  white-space: nowrap;
  line-height: 90px;
}
</style>

<style>
html,
body {
  margin: 0;
  background: #000;
}
</style>
